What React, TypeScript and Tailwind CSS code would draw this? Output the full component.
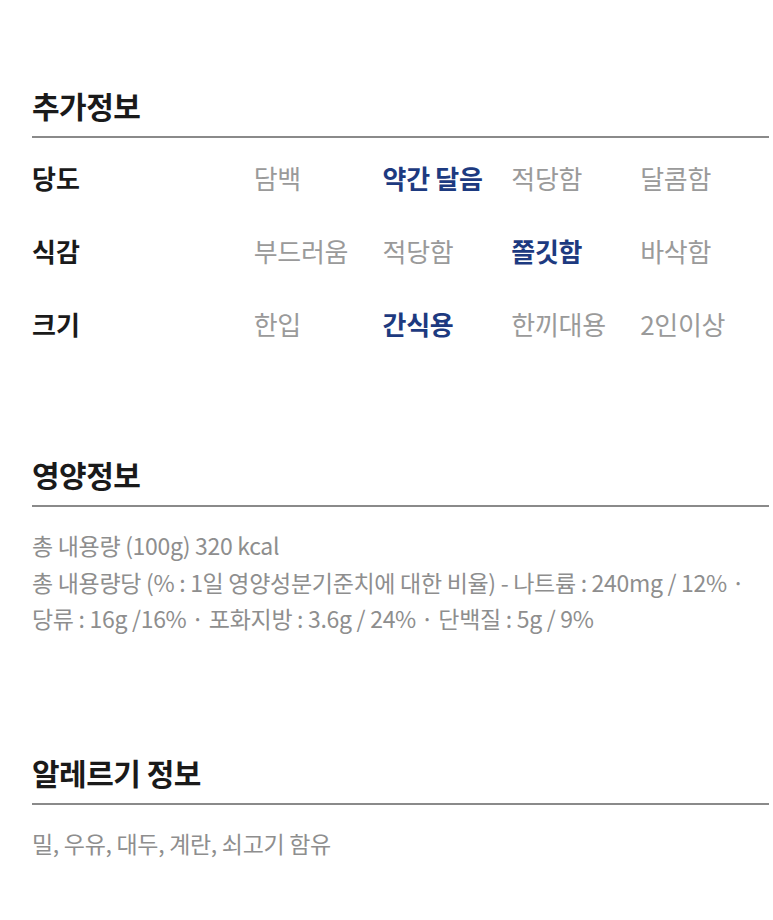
import React from "react";

const font = { fontFamily: '"Noto Sans CJK KR", "Noto Sans", sans-serif' };

const rows = [
  { label: "당도", opts: ["담백", "약간 달음", "적당함", "달콤함"], sel: 1 },
  { label: "식감", opts: ["부드러움", "적당함", "쫄깃함", "바삭함"], sel: 2 },
  { label: "크기", opts: ["한입", "간식용", "한끼대용", "2인이상"], sel: 1 },
];

function Heading({ children }: { children: React.ReactNode }) {
  return (
    <>
      <div className="h-[40px] leading-[40px] text-[30px] font-bold text-[#1a1a1a] tracking-[-0.5px]">
        {children}
      </div>
      <div className="mt-[11px] h-[2px] bg-[#8a8a8a]" />
    </>
  );
}

export default function App() {
  return (
    <div className="w-[773px] h-[920px] bg-white pl-8 pr-1 pt-[85px]" style={font}>
      <Heading>추가정보</Heading>
      <div className="mt-[3px]">
        {rows.map((r) => (
          <div key={r.label} className="flex h-[73px] items-center text-[26px]">
            <div className="w-[222px] font-bold text-[#1a1a1a]">{r.label}</div>
            {r.opts.map((o, i) => (
              <div
                key={o}
                className={
                  "w-[129px] whitespace-nowrap tracking-[-0.3px] " +
                  (i === r.sel ? "font-bold text-[#1d3a80]" : "text-[#9a9a9a]")
                }
              >
                {o}
              </div>
            ))}
          </div>
        ))}
      </div>

      <div className="mt-[94px]">
        <Heading>영양정보</Heading>
      </div>
      <div className="mt-[20px] text-[23px] leading-[36.5px] text-[#8e8e8e] tracking-[-0.3px]">
        <div className="whitespace-nowrap">총 내용량 (100g) 320 kcal</div>
        <div className="whitespace-nowrap">
          총 내용량당 (% : 1일 영양성분기준치에 대한 비율) - 나트륨 : 240mg / 12% ·
        </div>
        <div className="whitespace-nowrap">
          당류 : 16g /16% · 포화지방 : 3.6g / 24% · 단백질 : 5g / 9%
        </div>
      </div>

      <div className="mt-[115px]">
        <Heading>알레르기 정보</Heading>
      </div>
      <div className="mt-[20px] text-[23px] leading-[36.5px] text-[#8e8e8e] tracking-[-0.3px] whitespace-nowrap">
        밀, 우유, 대두, 계란, 쇠고기 함유
      </div>
    </div>
  );
}
